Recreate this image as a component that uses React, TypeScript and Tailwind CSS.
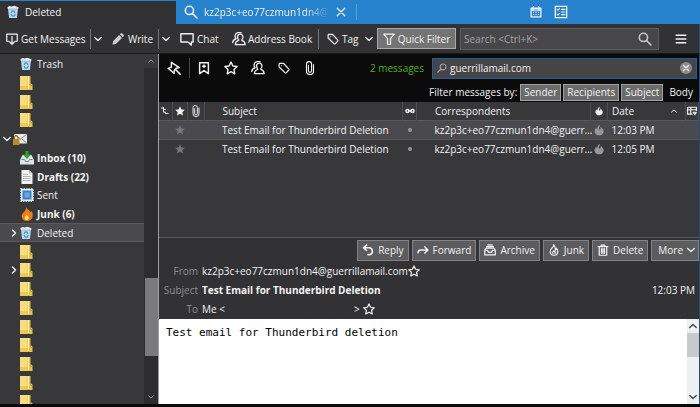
import { useState, type ReactNode } from "react";

type IconProps = { className?: string };

function Stroke({ className = "size-4", width = 1.6, children }: IconProps & { width?: number; children: ReactNode }) {
  return (
    <svg
      viewBox="0 0 16 16"
      className={`shrink-0 ${className}`}
      fill="none"
      stroke="currentColor"
      strokeWidth={width}
      strokeLinecap="round"
      strokeLinejoin="round"
      aria-hidden="true"
    >
      {children}
    </svg>
  );
}

const ChevronDown = ({ className = "size-2" }: IconProps) => (
  <Stroke className={className} width={2.6}><path d="M1.5 5l6.5 6 6.5-6" /></Stroke>
);
const ChevronUp = ({ className = "size-2" }: IconProps) => (
  <Stroke className={className} width={2.6}><path d="M1.5 11l6.5-6 6.5 6" /></Stroke>
);
const ChevronRight = ({ className = "size-2" }: IconProps) => (
  <Stroke className={className} width={2.8}><path d="M5 2l6 6-6 6" /></Stroke>
);
const Search = ({ className }: IconProps) => (
  <Stroke className={className} width={1.8}><circle cx="6.2" cy="6.2" r="4.7" /><path d="M9.8 9.8l5 5" /></Stroke>
);
const Star = ({ className }: IconProps) => (
  <Stroke className={className}><path d="M8 1.2l2.1 4.5 4.9.6-3.6 3.4.9 4.9L8 12.2l-4.3 2.4.9-4.9L1 6.3l4.9-.6z" /></Stroke>
);
const StarSolid = ({ className = "size-2" }: IconProps) => (
  <svg viewBox="0 0 16 16" className={className} fill="currentColor" aria-hidden="true">
    <path d="M8 .5l2.3 5 5.4.6-4 3.7 1.1 5.4L8 12.5l-4.8 2.7 1.1-5.4-4-3.7 5.4-.6z" />
  </svg>
);
const People = ({ className }: IconProps) => (
  <Stroke className={className} width={1.5}>
    <path d="M9.5 2.5a3 3 0 0 1 3 3.2c0 1.3-.5 2.2-1.2 3v1c2 .6 3.5 1.6 3.7 4.8H3.8c.2-3.2 1.7-4.2 3.7-4.8v-1c-.7-.8-1.2-1.7-1.2-3a3 3 0 0 1 3.2-3.2z" />
    <path d="M10.5.9C7.5-.1 3.5 1 3.5 4.500c0 1.500.5 2.300 1.200 3.100C2.500 8.500 1 9.500.8 12" />
  </Stroke>
);
const Tag = ({ className }: IconProps) => (
  <Stroke className={className}><path d="M1.5 2.5v4.2l7.7 7.5c.6.6 1.4.6 2 0l3-3.2c.5-.6.5-1.3 0-1.9L7.2 1.7H2.5a1 1 0 0 0-1 .8z" /><path d="M4.7 5h.1" /></Stroke>
);
const Clip = ({ className }: IconProps) => (
  <Stroke className={className} width={1.3}><path d="M12 4v7.5a4 4 0 0 1-8 0V3.6a2.9 2.9 0 0 1 5.8 0v7.6a1.8 1.8 0 0 1-3.6 0V5" /></Stroke>
);
const Flame = ({ className = "h-3 w-2.5" }: IconProps) => (
  <svg viewBox="0 0 14 16" className={className} fill="currentColor" aria-hidden="true">
    <path d="M8 .5c.4 2-.6 3.2-1 4.500-.3 1.300.2 2.500 1.100 2.500C9.500 7.500 9.500 5.500 9 3.500c2.500 1.500 4.500 3.800 4.500 6.500 0 3.300-2.800 5.500-6.300 5.500S.8 13.300.8 10c0-2.500 1.400-4 2.600-5 .1 1.300.3 2 .9 2.500C4.200 4.500 5.500 2 8 .5z" />
  </svg>
);

function TrashCan({ className = "h-3.5 w-3" }: IconProps) {
  return (
    <svg viewBox="0 0 13 14" className={`shrink-0 ${className}`} aria-hidden="true">
      <path d="M1 2.5h11l-1.3 11H2.3z" fill="#b9d9ec" />
      <path d="M.5 1.500L3 .5l2 .6L8 .3l4.500 1.500-.4 2H.9z" fill="#e4eef4" />
      <path d="M2 3.800h9" stroke="#7f9fb3" strokeWidth=".7" />
      <path d="M4.300 8l1.200-2h2L8.700 8M9 9.300l-1.200 2H5.500L4.200 9.300" fill="none" stroke="#2d86bd" strokeWidth="1.1" />
    </svg>
  );
}

const Folder = () => (
  <svg viewBox="0 0 13 14" className="h-3.5 w-[13px] shrink-0" aria-hidden="true">
    <path d="M0 0h10.5v7l2 1.5V14H0z" fill="#e6c14c" />
    <path d="M0 0h7.5v14H0z" fill="#f5dd80" />
    <path d="M0 10h9v4H0z" fill="#e7bd3f" opacity=".6" />
    <path d="M8.500 0v13" stroke="#fff3b8" />
    <path d="M10.500 7v2l2 1" fill="none" stroke="#b18b25" strokeWidth=".7" />
  </svg>
);
const InboxIcon = () => (
  <svg viewBox="0 0 14 14" className="size-3.5 shrink-0" aria-hidden="true">
    <path d="M2.500 4h9L14 9v4.500H0V9z" fill="#dfe3e6" />
    <path d="M1.500 8.500h3l1 2h3l1-2h3" fill="none" stroke="#7b8690" />
    <path d="M5.500 0h3v3.500h2.700L7 8 2.800 3.500h2.700z" fill="#27a62f" />
  </svg>
);
const DraftIcon = () => (
  <svg viewBox="0 0 14 14" className="size-3.5 shrink-0" aria-hidden="true">
    <path d="M1.500 0h7.500l3.500 3.500V14h-11z" fill="#f1f1f1" />
    <path d="M9 0v3.500h3.500" fill="#bfc3c7" />
    <path d="M3 4.500h5M3 6.500h7.500M3 8.500h7.500M3 10.500h7.500" stroke="#a5a9ad" strokeWidth=".8" />
  </svg>
);
const SentIcon = () => (
  <svg viewBox="0 0 14 14" className="size-3.5 shrink-0" aria-hidden="true">
    <path d="M1 1h12v12H1z" fill="#dce8f4" stroke="#eef4fa" strokeWidth="1.5" strokeDasharray="1.5 1" />
    <path d="M2.500 2.500h9v9h-9z" fill="#3f82c8" />
    <path d="M4.500 4.500h5v5h-5z" fill="#6fa8e0" />
  </svg>
);
const JunkIcon = () => (
  <svg viewBox="0 0 14 14" className="size-3.5 shrink-0" aria-hidden="true">
    <path d="M6 0c1 2.500 4 3 4.500 5.500.6-.5.7-1.200.6-2C13 6 13 8 12.500 10c-.7 2.600-2.800 4-5.500 4s-5-1.500-5.300-4.500C1.500 7 3 6 4.500 4.500 5.800 3 6.200 1.500 6 0z" fill="#ef7d17" />
    <path d="M6.500 7.500c1.300 1.500 2.300 2 2.200 3.500-.1 1.200-.9 1.900-2 1.900s-2-.8-2-2c0-1.500 1.600-1.800 1.800-3.400z" fill="#ffdf80" />
  </svg>
);
const AccountIcon = () => (
  <svg viewBox="0 0 14 12" className="h-3 w-3.5 shrink-0" aria-hidden="true">
    <path d="M1 1h13v9.500H1z" fill="#eceae4" />
    <path d="M1.500 1.500L7.500 6l6-4.500M9 6l4.500 4" fill="none" stroke="#77756f" strokeWidth=".9" />
    <path d="M0 6h6.500v6H0z" fill="#b58b2c" />
    <path d="M1.500 6V4.500a1.700 1.700 0 0 1 3.500 0V6" fill="none" stroke="#8d6c1d" strokeWidth="1.1" />
  </svg>
);

type FolderRow = { icon: ReactNode; name?: string; bold?: boolean; expander?: "open" | "closed"; account?: boolean };

const folders: FolderRow[] = [
  { icon: <TrashCan />, name: "Trash" },
  { icon: <Folder /> },
  { icon: <Folder /> },
  { icon: <Folder /> },
  { icon: <AccountIcon />, expander: "open", account: true },
  { icon: <InboxIcon />, name: "Inbox (10)", bold: true },
  { icon: <DraftIcon />, name: "Drafts (22)", bold: true },
  { icon: <SentIcon />, name: "Sent" },
  { icon: <JunkIcon />, name: "Junk (6)", bold: true },
  { icon: <TrashCan />, name: "Deleted", expander: "closed" },
  { icon: <Folder /> },
  { icon: <Folder />, expander: "closed" },
  { icon: <Folder /> },
  { icon: <Folder /> },
  { icon: <Folder /> },
  { icon: <Folder /> },
  { icon: <Folder /> },
  { icon: <Folder /> },
  { icon: <Folder /> },
];

const messages = [
  { subject: "Test Email for Thunderbird Deletion", from: "kz2p3c+eo77czmun1dn4@guerr...", date: "12:03 PM" },
  { subject: "Test Email for Thunderbird Deletion", from: "kz2p3c+eo77czmun1dn4@guerr...", date: "12:05 PM" },
];

function TabBar() {
  return (
    <div className="flex h-6 shrink-0 bg-[#2782ce]">
      <button className="flex w-44 items-center gap-1.5 border-t border-[#2782ce] bg-[#323234] pb-px pl-[7px] text-left">
        <TrashCan />
        Deleted
      </button>
      <div className="my-1 flex flex-1 items-center">
        <div className="flex w-[181px] items-center border-r border-[#5aa2dd] pl-2">
          <Search className="size-3.5" />
          <button className="ml-1.5 w-[126px] whitespace-nowrap text-left [mask-image:linear-gradient(to_right,#000_80%,transparent)]">
            kz2p3c+eo77czmun1dn4@g
          </button>
          <button aria-label="Close tab" className="ml-1.5">
            <Stroke className="size-2.5" width={2}><path d="M2 2l12 12M14 2L2 14" /></Stroke>
          </button>
        </div>
      </div>
      <div className="flex w-[170px] items-center gap-3">
        <button aria-label="Calendar">
          <Stroke className="size-3" width={1.7}>
            <path d="M1.5 3h13v11.5h-13zM4.5.8V4M11.5.8V4M1.5 5.5h13" />
            <path d="M4 8.500h1.500M7.300 8.500h1.500M10.600 8.500h1.500M4 11.500h1.500M7.300 11.500h1.500M10.600 11.500h1.500" strokeLinecap="butt" />
          </Stroke>
        </button>
        <button aria-label="Tasks">
          <Stroke className="size-3.5" width={1.5}>
            <path d="M1.5 1.5h13v13h-13z" />
            <path d="M3.5 5l1 1 1.800-2M3.500 10.500l1 1 1.800-2M8.500 5h4M8.500 8h4M8.500 11h4" strokeWidth="1.2" />
          </Stroke>
        </button>
      </div>
    </div>
  );
}

const Divider = () => <span className="h-5 w-px bg-[#77777a]" />;

function Toolbar({ filterOn, onToggle }: { filterOn: boolean; onToggle: () => void }) {
  return (
    <div className="flex h-[30px] shrink-0 items-center border-b border-[#19191a] border-r border-r-[#1d4f7d] bg-[#323234] px-1.5">
      <button className="flex w-[84px] items-center gap-[3px] whitespace-nowrap">
        <Stroke className="size-3"><path d="M4 11H1V1.5h14V11h-3M8 4.5V15M5 12l3 3 3-3" /></Stroke>
        Get Messages
      </button>
      <Divider />
      <button aria-label="Get messages menu" className="flex w-[21px] pl-[3px]"><ChevronDown /></button>
      <button className="flex w-[46px] items-center gap-1">
        <svg viewBox="0 0 16 16" className="size-3 shrink-0 text-[#cfcfcf]" fill="currentColor" aria-hidden="true">
          <path d="M.5 15.5l1.2-5L9.5 2.7l3.8 3.8-7.8 7.8zM10.5 1.7l1-1a1.6 1.6 0 0 1 2.3 0l1.5 1.5c.7.7.7 1.6 0 2.3l-1 1z" />
        </svg>
        Write
      </button>
      <Divider />
      <button aria-label="Write menu" className="flex w-[21px] pl-[3px]"><ChevronDown /></button>
      <button className="flex w-[52px] items-center gap-[3px]">
        <Stroke className="size-3.5"><path d="M1 2h14v9.5h-2V15l-4-3.5H1z" /></Stroke>
        Chat
      </button>
      <button className="flex w-[86px] items-center gap-0.5 whitespace-nowrap">
        <People className="size-3.5" />
        Address Book
      </button>
      <Divider />
      <button className="flex w-[58px] items-center gap-[3px] pl-2">
        <Tag className="size-3" />
        Tag
        <ChevronDown className="ml-[3px] size-2" />
      </button>
      <button
        aria-pressed={filterOn}
        onClick={onToggle}
        className="flex h-[21px] w-[79px] items-center justify-center gap-[3px] whitespace-nowrap border border-[#a9a9a9] bg-[#747474]"
      >
        <Stroke className="size-3"><path d="M1 1.5h14l-5 6V15H6V7.5z" /></Stroke>
        Quick Filter
      </button>
      <label className="ml-1 flex h-[22px] min-w-0 flex-1 items-center border border-[#5d5d60] bg-[#474749] pr-1.5 pl-[3px]">
        <input
          type="search"
          aria-label="Search"
          placeholder="Search <Ctrl+K>"
          className="min-w-0 flex-1 bg-transparent outline-none placeholder:text-[#a5a5a7]"
        />
        <Search className="size-3.5 text-[#c9c9c9]" />
      </label>
      <button aria-label="Menu" className="ml-3.5 pr-1.5 pl-0.5">
        <Stroke className="size-3" width={1.8}><path d="M1.5 3h13M1.5 8h13M1.5 13h13" /></Stroke>
      </button>
    </div>
  );
}

function FolderPane() {
  const [selected, setSelected] = useState(9);
  return (
    <div className="flex w-[158px] shrink-0 bg-[#38383b]">
      <ul className="min-w-0 flex-1 overflow-hidden">
        {folders.map((f, i) => (
          <li key={i} className={i % 4 === 3 ? "h-[18px]" : "h-[19px]"}>
            <button
              aria-label={f.name ?? "Folder"}
              onClick={() => setSelected(i)}
              className={`flex size-full items-center border-y ${f.account ? "pl-[3px]" : "pl-2.5"} ${
                selected === i ? "border-[#5b5b5f] bg-[#4b4b4f]" : "border-transparent"
              }`}
            >
              <span className="flex w-2.5">
                {f.expander === "open" && <ChevronDown />}
                {f.expander === "closed" && <ChevronRight />}
              </span>
              <span className="flex w-[17px]">{f.icon}</span>
              <span className={f.bold ? "font-bold" : ""}>{f.name}</span>
            </button>
          </li>
        ))}
      </ul>
      <div className="flex w-3.5 flex-col items-center bg-[#2d2d2f] text-[#9a9a9a]">
        <span className="flex h-3.5 w-full items-center justify-center bg-[#38383a]"><ChevronUp className="size-1.5" /></span>
        <span className="flex-[209]" />
        <span className="w-[13px] flex-[77] bg-[#7b7b7d]" />
        <span className="flex-[34]" />
        <span className="flex h-3.5 items-center"><ChevronDown className="size-1.5" /></span>
      </div>
    </div>
  );
}

function QuickFilter() {
  const [text, setText] = useState("guerrillamail.com");
  const [fields, setFields] = useState<Record<string, boolean>>({ Sender: true, Recipients: true, Subject: true, Body: false });
  return (
    <div className="shrink-0 bg-[#0b0b0b]">
      <div className="flex h-7 items-center pr-0.5 pl-2">
        <button aria-label="Keep filters" className="w-[22px]">
          <Stroke className="size-3.5" width={1.7}><path d="M5 1.5l9 6-3.5.8-2 2.2L8 14 1.5 8.5 5 7zM9.5 9.5L15 15" /></Stroke>
        </button>
        <span className="h-5 w-px bg-[#4a4a4a]" />
        <div className="flex items-center gap-[13px] pl-[7px]">
          <button aria-label="Unread">
            <Stroke className="size-3.5" width={1.7}><path d="M3 2h10v12.5l-5-3.5-5 3.5zM8 4.5v3M6.5 6h3" /></Stroke>
          </button>
          <button aria-label="Starred"><Star className="size-3.5" /></button>
          <button aria-label="Contact"><People className="size-3.5" /></button>
          <button aria-label="Tags"><Tag className="size-3" /></button>
          <button aria-label="Attachment"><Clip className="size-3.5" /></button>
        </div>
        <span className="ml-auto pr-2 text-[#58a92a]">2 messages</span>
        <label className="flex h-[21px] w-[265px] items-center border border-[#1f5f9f] bg-[#454547] px-1">
          <Search className="size-2.5 -scale-x-100 text-[#a5a5a5]" />
          <input
            aria-label="Filter text"
            value={text}
            onChange={(e) => setText(e.target.value)}
            className="min-w-0 flex-1 bg-transparent pl-[3px] outline-none"
          />
          <button aria-label="Clear" onClick={() => setText("")} className="rounded-full bg-[#8d8d8d] p-0.5">
            <Stroke className="size-2" width={2.6}><path d="M3 3l10 10M13 3L3 13" /></Stroke>
          </button>
        </label>
      </div>
      <div className="flex h-5 items-center justify-end gap-0.5 pr-0.5">
        <span className="pr-px">Filter messages by:</span>
        {Object.keys(fields).map((name) => (
          <button
            key={name}
            aria-pressed={fields[name]}
            onClick={() => setFields({ ...fields, [name]: !fields[name] })}
            className={`flex h-[17px] items-center border px-[3px] ${
              fields[name] ? "border-[#a0a0a0] bg-[#6b6b6b]" : "border-transparent"
            }`}
          >
            {name}
          </button>
        ))}
      </div>
    </div>
  );
}

function MessageList() {
  const [selected, setSelected] = useState(0);
  return (
    <div className="h-34 shrink-0 border-b border-[#5a5a5c] bg-[#38383b]">
      <table className="w-full table-fixed border-collapse text-left whitespace-nowrap">
        <colgroup>
          <col className="w-[13px]" />
          <col className="w-[15px]" />
          <col className="w-[17px]" />
          <col />
          <col className="w-3.5" />
          <col className="w-[174px]" />
          <col className="w-[17px]" />
          <col className="w-[78px]" />
          <col className="w-[13px]" />
        </colgroup>
        <thead>
          <tr className="h-[18px] [&>th]:border-r [&>th]:border-[#4d4d50] [&>th]:p-0 [&>th]:font-normal">
            <th aria-label="Thread">
              <Stroke className="mx-auto size-2" width={2}><path d="M1 2h4M5 1v9.5h4M5 5h4M9 13h5" /></Stroke>
            </th>
            <th aria-label="Starred"><StarSolid className="mx-auto size-2.5" /></th>
            <th aria-label="Attachments"><Clip className="mx-auto size-3" /></th>
            <th><span className="pl-[18px]">Subject</span></th>
            <th aria-label="Read">
              <Stroke className="mx-auto size-2.5" width={2.4}><circle cx="4" cy="8" r="2.5" /><circle cx="12" cy="8" r="2.5" /><path d="M6.5 8h3" /></Stroke>
            </th>
            <th><span className="pl-[18px]">Correspondents</span></th>
            <th aria-label="Junk"><Flame className="mx-auto h-2.5 w-2" /></th>
            <th>
              <span className="flex items-center justify-between pr-2 pl-1">Date <ChevronUp className="size-1.5" /></span>
            </th>
            <th aria-label="Columns">
              <Stroke className="mx-auto size-2.5" width={1.9}><path d="M8 13H1V2h14v5M1 6h14M6 2v11M10 10h5l-2.5 4z" /></Stroke>
            </th>
          </tr>
        </thead>
        <tbody>
          {messages.map((m, i) => (
            <tr
              key={m.date}
              onClick={() => setSelected(i)}
              className={`h-[19px] [&>td]:p-0 ${selected === i ? "border-y border-[#58585b] bg-[#4a4a4e]" : ""}`}
            >
              <td />
              <td><StarSolid className="mx-auto size-2.5 text-[#77777a]" /></td>
              <td />
              <td><span className="pl-[18px]">{m.subject}</span></td>
              <td><span className="mx-auto block size-1 rounded-full bg-[#98989a]" /></td>
              <td><span className="pl-[18px]">{m.from}</span></td>
              <td><Flame className="mx-auto h-3 w-2.5 text-[#98989a]" /></td>
              <td><span className="pl-1">{m.date}</span></td>
              <td />
            </tr>
          ))}
        </tbody>
      </table>
    </div>
  );
}

const actions: { label: string; icon: ReactNode }[] = [
  { label: "Reply", icon: <Stroke className="size-3" width={2.2}><path d="M6 1.5L2 5l4 3.5M2.5 5H9a4.7 4.7 0 0 1 1.5 9.2H8" /></Stroke> },
  { label: "Forward", icon: <Stroke className="size-3" width={2.2}><path d="M10.5 4L14.5 8l-4 4M14 8H5c-2 0-3.5 1-3.5 3.5" /></Stroke> },
  { label: "Archive", icon: <Stroke className="size-3"><path d="M1 8l2-2.5h10L15 8v6.5H1zM1 8.5h4c0 3.5 6 3.5 6 0h4M3.5 3.5h9M5 1.2h6" /></Stroke> },
  { label: "Junk", icon: <Stroke className="size-3"><path d="M7.500 1c1 3-4.500 4.500-4.500 9 0 3 2.200 5 5 5s5-2 5-5c0-2-1-3.500-2-4.500 0 1.500-.5 2-1 2.500C10 5.500 9.500 2.500 7.500 1z" /><path d="M8 9c-1.500 1-2 2-1.500 3.500M8 9c1.500 1 2 2 1.500 3.500" /></Stroke> },
  { label: "Delete", icon: <Stroke className="size-3"><path d="M1.5 3.5h13M5.5 3.5v-2h5v2M3 3.5V15h10V3.5M6 6v6.5M8 6v6.5M10 6v6.5" /></Stroke> },
];

function Reader() {
  return (
    <>
      <div className="shrink-0 bg-[#323234]">
        <div className="flex h-6 items-center justify-end gap-[3px]">
          {actions.map((a) => (
            <button key={a.label} className="flex h-[21px] items-center gap-1 border border-[#828284] bg-[#5c5c5e] px-1">
              {a.icon}
              {a.label}
            </button>
          ))}
          <button className="flex h-[21px] items-center gap-1 border border-[#828284] bg-[#5c5c5e] pr-[3px] pl-1.5">
            More <ChevronDown />
          </button>
        </div>
        <dl className="pr-1 [&_dt]:w-[39px] [&_dt]:shrink-0 [&_dt]:text-right [&_dt]:text-[#8f8f91]">
          <div className="flex h-[18px] items-center gap-1">
            <dt>From</dt>
            <dd className="flex items-center">
              kz2p3c+eo77czmun1dn4@guerrillamail.com <Star className="size-3" />
            </dd>
          </div>
          <div className="flex h-[19px] items-center gap-1">
            <dt>Subject</dt>
            <dd className="font-bold">Test Email for Thunderbird Deletion</dd>
            <dd className="ml-auto">12:03 PM</dd>
          </div>
          <div className="flex h-5 items-center gap-1">
            <dt>To</dt>
            <dd className="flex items-center gap-[3px]">
              <span className="w-[149px]">Me &lt;</span>
              <span>&gt;</span>
              <Star className="size-3" />
            </dd>
          </div>
        </dl>
      </div>
      <div className="flex min-h-0 flex-1 bg-white text-black">
        <pre className="flex-1 px-[7px] pt-1.5 font-['DejaVu_Sans_Mono',monospace] text-[11px] leading-4">Test email for Thunderbird deletion</pre>
        <div className="flex w-3 flex-col items-center bg-[#efefef] text-[#404040]">
          <span className="flex h-3.5 items-center"><ChevronUp className="size-2" /></span>
          <span className="h-6 w-full bg-[#c9c9c9]" />
          <span className="mt-auto flex h-3.5 items-center"><ChevronDown className="size-2" /></span>
        </div>
      </div>
    </>
  );
}

export default function App() {
  const [filterOn, setFilterOn] = useState(true);
  return (
    <div className="flex h-screen flex-col overflow-hidden bg-[#0b0b0b] pb-[3px] font-['Open_Sans','Noto_Sans',sans-serif] text-[10px] leading-4 text-[#f2f2f2]">
      <TabBar />
      <Toolbar filterOn={filterOn} onToggle={() => setFilterOn(!filterOn)} />
      <div className="flex min-h-0 flex-1">
        <FolderPane />
        <main className="flex min-w-0 flex-1 flex-col border-r border-l border-r-[#1d4f7d] border-l-[#a0a0a2]">
          {filterOn && <QuickFilter />}
          <MessageList />
          <Reader />
        </main>
      </div>
    </div>
  );
}
